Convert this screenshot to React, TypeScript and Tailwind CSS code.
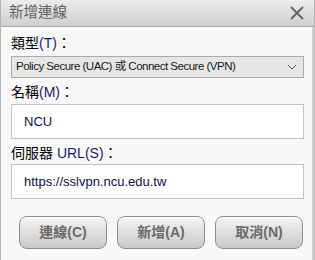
import React from "react";

const font = { fontFamily: '"Liberation Sans", "Noto Sans CJK TC", sans-serif' };

function Btn({ label }: { label: string }) {
  return (
    <button
      className="h-[33px] w-[88px] rounded-[8px] border border-[#8e8e8e] bg-gradient-to-b from-[#f4f4f4] to-[#c9c9c9] text-[14px] font-bold text-[#6a6a6a] shadow-[inset_0_1px_0_#ffffff]"
    >
      {label}
    </button>
  );
}

export default function App() {
  return (
    <div
      className="flex h-[260px] w-[315px] flex-col overflow-hidden border-x border-[#b4b4b4] bg-[#f8f8f8]"
      style={font}
    >
      <div className="flex h-[27px] shrink-0 items-center justify-between border-b border-[#a9a9a9] bg-gradient-to-b from-[#ececec] to-[#cfcfcf] pl-[8px] pr-[10px]">
        <span className="text-[14.5px] text-[#626262]">新增連線</span>
        <svg width="14" height="14" viewBox="0 0 14 14" className="mb-[1px]">
          <path d="M1 1 L13 13 M13 1 L1 13" stroke="#626262" strokeWidth="1.8" />
        </svg>
      </div>
      <div className="flex flex-1 flex-col border-r-[2px] border-[#d0d0d0] pl-[10px] pr-[8px]">
        <div className="mt-[6px] text-[14px] leading-[20px] text-black">
          類型<span className="text-[#1a1a6a]">(T)</span>：
        </div>
        <div className="mt-[3px] flex h-[22px] items-center justify-between border border-[#acacac] bg-[#e6e6e6] pl-[4px] pr-[6px]">
          <span className="text-[11.5px] tracking-[-0.5px] text-[#1a1a1a]">
            Policy Secure (UAC) 或 Connect Secure (VPN)
          </span>
          <svg width="10" height="6" viewBox="0 0 10 6">
            <path d="M1 1 L5 5 L9 1" stroke="#555" strokeWidth="1" fill="none" />
          </svg>
        </div>
        <div className="mt-[4px] text-[14px] leading-[20px] text-black">
          名稱<span className="text-[#1a1a6a]">(M)</span>：
        </div>
        <div className="mt-[2px] flex h-[35px] items-center border border-[#c3c3c3] bg-white pl-[12px] text-[13px] text-[#10104a]">
          NCU
        </div>
        <div className="mt-[4px] text-[14px] leading-[20px] text-black">
          伺服器 <span className="text-[#1a1a6a]">URL(S)</span>：
        </div>
        <div className="mt-[1px] flex h-[35px] items-center border border-[#c3c3c3] bg-white pl-[12px] text-[13px] text-[#10104a]">
          https://sslvpn.ncu.edu.tw
        </div>
        <div className="mt-[17px] flex gap-[10px] pl-[8px]">
          <Btn label="連線(C)" />
          <Btn label="新增(A)" />
          <Btn label="取消(N)" />
        </div>
      </div>
    </div>
  );
}
